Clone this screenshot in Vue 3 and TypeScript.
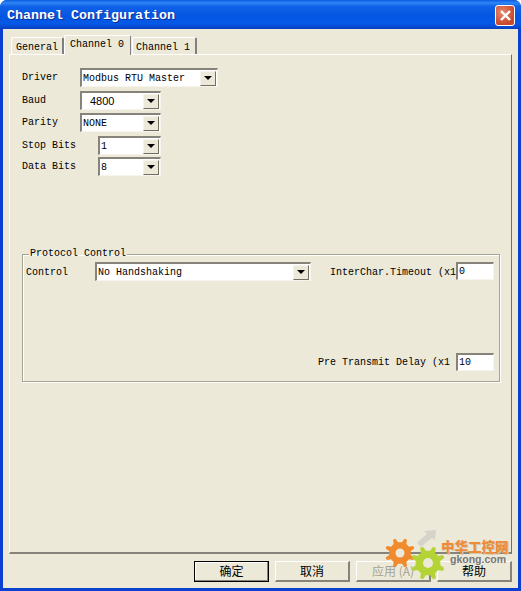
<script setup lang="ts">
interface Row { label: string; value: string; width: number; gap: number; h: number }
const rows: Row[] = [
  { label: 'Driver', value: 'Modbus RTU Master', width: 138, gap: 58, h: 23 },
  { label: 'Baud', value: '4800', width: 81, gap: 58, h: 22 },
  { label: 'Parity', value: 'NONE', width: 81, gap: 58, h: 23 },
  { label: 'Stop Bits', value: '1', width: 63, gap: 76, h: 21 },
  { label: 'Data Bits', value: '8', width: 63, gap: 76, h: 22 },
]
const tabs = ['General', 'Channel 0', 'Channel 1']
const buttons = ['确定', '取消', '应用 (A)', '帮助']
function gearPath(cx: number, cy: number, r: number, t: number): string {
  let d = ''
  for (let i = 0; i < 8; i++) {
    const a = (i * Math.PI) / 4
    const pts: [number, number][] = [[-0.3, r], [-0.18, t], [0.18, t], [0.3, r]]
    for (const [o, rad] of pts) {
      const x = cx + rad * Math.cos(a + o)
      const y = cy + rad * Math.sin(a + o)
      d += `${d ? 'L' : 'M'}${x.toFixed(1)} ${y.toFixed(1)}`
    }
  }
  return d + 'Z'
}
</script>

<template>
  <div class="window">
    <div class="titlebar">
      <span class="title">Channel Configuration</span>
      <div class="close">
        <svg width="13" height="13" viewBox="0 0 13 13"><path d="M2 2 L11 11 M11 2 L2 11" stroke="#fff" stroke-width="2.4" /></svg>
      </div>
    </div>
    <div class="client">
      <div class="tabs">
        <div v-for="(t, i) in tabs" :key="t" class="tab" :class="{ active: i === 1 }">{{ t }}</div>
      </div>
      <div class="panel">
        <div class="form">
          <div v-for="r in rows" :key="r.label" class="row" :style="{ height: r.h + 'px' }">
            <span class="label" :style="{ width: r.gap + 'px' }">{{ r.label }}</span>
            <div class="combo" :style="{ width: r.width + 'px' }">
              <span class="value" :class="{ sans: r.value === '4800' }">{{ r.value }}</span>
              <span class="arrow"><i></i></span>
            </div>
          </div>
        </div>
        <fieldset class="group">
          <legend>Protocol Control</legend>
          <div class="group-top">
            <span class="ctl-label">Control</span>
            <div class="combo ctl-combo">
              <span class="value">No Handshaking</span>
              <span class="arrow"><i></i></span>
            </div>
            <span class="ic-label">InterChar.Timeout (x1</span>
            <div class="field">0</div>
          </div>
          <div class="group-bottom">
            <span class="pre-label">Pre Transmit Delay (x1</span>
            <div class="field">10</div>
          </div>
        </fieldset>
      </div>
      <div class="footer">
        <div v-for="(b, i) in buttons" :key="b" class="btn" :class="{ def: i === 0, off: i === 2 }">{{ b }}</div>
      </div>
    </div>
    <div class="mark">
      <svg class="mark-art" width="136" height="72" viewBox="0 0 136 72">
        <path d="M32 25 Q38 19 42 16 L39 13 L51 12 L50 22 L47 20 Q41 24 36 29 Z" fill="#d5d3c8" opacity="0.95" />
        <path :d="gearPath(15, 35, 15, 11)" fill="#f08a2c" />
        <circle cx="15" cy="35" r="4.5" fill="#ece9d8" />
        <path :d="gearPath(43, 45, 17, 12.5)" fill="#b4d335" />
        <circle cx="43" cy="45" r="5" fill="#ece9d8" />
      </svg>
      <span class="mark-cn">中华工控网</span>
      <span class="mark-en">gkong.com</span>
    </div>
  </div>
</template>

<style scoped>
.window {
  position: relative;
  width: 521px;
  height: 591px;
  box-sizing: border-box;
  display: flex;
  flex-direction: column;
  overflow: hidden;
  padding-bottom: 3px;
  background: #0a3fd0;
  border-radius: 7px 7px 0 0;
  font-family: "Liberation Mono", monospace;
  font-size: 10px;
  color: #000;
}
.titlebar {
  height: 29px;
  flex: none;
  display: flex;
  align-items: center;
  justify-content: space-between;
  padding: 1px 6px 0 7px;
  box-sizing: border-box;
  background: linear-gradient(180deg, #0a5ae0 0%, #2f86f5 10%, #0f62e6 22%, #0455e2 55%, #0559e6 82%, #0a3fc0 100%);
}
.title {
  color: #fff;
  font-size: 13.33px;
  font-weight: bold;
  text-shadow: 1px 1px 0 #0a2f9a;
}
.close {
  width: 20px;
  height: 21px;
  box-sizing: border-box;
  display: flex;
  align-items: center;
  justify-content: center;
  border: 1px solid #fff;
  border-radius: 3px;
  background: radial-gradient(circle at 35% 35%, #e58a70, #c8492c 70%);
}
.client {
  flex: 1;
  margin: 0 3px;
  padding: 6px 6px 0;
  background: #ece9d8;
  display: flex;
  flex-direction: column;
}
.tabs {
  height: 19px;
  display: flex;
  align-items: flex-end;
  padding-left: 2px;
  position: relative;
  z-index: 1;
}
.tab {
  height: 17px;
  box-sizing: border-box;
  padding: 3px 0 0 4px;
  line-height: 13px;
  border-top: 1px solid #fff;
  border-left: 1px solid #fff;
  border-right: 2px solid #808080;
  border-radius: 2px 2px 0 0;
  width: 53px;
}
.tab:nth-child(3) { width: 65px; padding-left: 3px; margin-left: 1px; }
.tab.active {
  height: 20px;
  width: 67px;
  margin-bottom: -1px;
  padding: 2px 0 0 5px;
  background: #ece9d8;
  border-right-width: 1px;
}
.panel {
  height: 500px;
  box-sizing: border-box;
  border-top: 1px solid #fff;
  border-left: 1px solid #fff;
  border-right: 1px solid #716f64;
  border-bottom: 2px solid #85837a;
  padding: 13px 11px 0 12px;
  background: #ece9d8;
}
.form {
  height: 180px;
  display: flex;
  flex-direction: column;
}
.row {
  display: flex;
  align-items: flex-start;
}
.label { flex: none; line-height: 20px; }
.combo {
  height: 19px;
  box-sizing: border-box;
  display: flex;
  align-items: center;
  justify-content: space-between;
  background: #fff;
  border-top: 2px solid #85837a;
  border-left: 2px solid #85837a;
  border-right: 1px solid #f6f4ec;
  border-bottom: 1px solid #f6f4ec;
  padding-right: 1px;
}
.value { padding-left: 1px; line-height: 15px; }
.value.sans { padding-left: 8px; font-family: "Liberation Sans", sans-serif; font-size: 11px; }
.arrow {
  width: 16px;
  height: 15px;
  box-sizing: border-box;
  display: flex;
  align-items: center;
  justify-content: center;
  background: #ece9d8;
  border-top: 1px solid #f6f4ec;
  border-left: 1px solid #f6f4ec;
  border-right: 1px solid #716f64;
  border-bottom: 1px solid #716f64;
}
.arrow i {
  width: 0;
  height: 0;
  border-left: 4px solid transparent;
  border-right: 4px solid transparent;
  border-top: 4px solid #000;
}
.group {
  margin: 0;
  height: 134px;
  box-sizing: border-box;
  width: 478px;
  border: 1px solid #a5a391;
  box-shadow: 1px 1px 0 #fff, inset 1px 1px 0 #fff;
  display: flex;
  flex-direction: column;
  justify-content: space-between;
  padding: 2px 5px 10px 3px;
}
.group legend {
  margin-left: 3px;
  padding: 0 1px;
  line-height: 12px;
}
.group-top { display: flex; align-items: flex-start; }
.ctl-label { width: 69px; flex: none; line-height: 21px; }
.ctl-combo { width: 216px; flex: none; }
.ic-label { margin-left: 19px; width: 126px; flex: none; line-height: 21px; white-space: nowrap; overflow: hidden; }
.group-bottom { display: flex; justify-content: flex-end; align-items: flex-start; height: 18px; }
.pre-label { height: 18px; line-height: 19px; white-space: nowrap; width: 138px; flex: none; }
.field {
  width: 38px;
  height: 18px;
  box-sizing: border-box;
  background: #fff;
  border-top: 2px solid #85837a;
  border-left: 2px solid #85837a;
  border-right: 1px solid #f6f4ec;
  border-bottom: 1px solid #f6f4ec;
  padding-left: 1px;
  line-height: 15px;
  flex: none;
}
.footer {
  display: flex;
  justify-content: flex-end;
  gap: 6px;
  margin-top: 7px;
}
.btn {
  width: 75px;
  height: 21px;
  box-sizing: border-box;
  font-family: "Noto Sans CJK SC", sans-serif;
  font-size: 12px;
  line-height: 17px;
  text-align: center;
  border-top: 1px solid #fff;
  border-left: 1px solid #fff;
  border-right: 2px solid #85837a;
  border-bottom: 2px solid #85837a;
}
.btn.def {
  border: 1px solid #000;
  box-shadow: inset -1px -1px 0 #85837a, inset 1px 1px 0 #fff;
}
.btn.off { color: #a5a391; }
.mark {
  position: absolute;
  left: 385px;
  top: 518px;
  width: 136px;
  height: 72px;
  pointer-events: none;
}
.mark-art { position: absolute; left: 0; top: 0; }
.mark-cn {
  position: absolute;
  left: 56px;
  top: 21px;
  font-family: "Noto Sans CJK SC", sans-serif;
  font-size: 13.5px;
  line-height: 14px;
  font-weight: 900;
  color: #ee8c3a;
  white-space: nowrap;
  text-shadow: 1px 1px 0 #cfc9b4;
}
.mark-en {
  position: absolute;
  left: 65px;
  top: 36px;
  font-family: "Liberation Sans", sans-serif;
  font-size: 10.5px;
  line-height: 10px;
  font-weight: bold;
  color: #777;
}
</style>

<style>
html, body { margin: 0; background: #fff; }
</style>
